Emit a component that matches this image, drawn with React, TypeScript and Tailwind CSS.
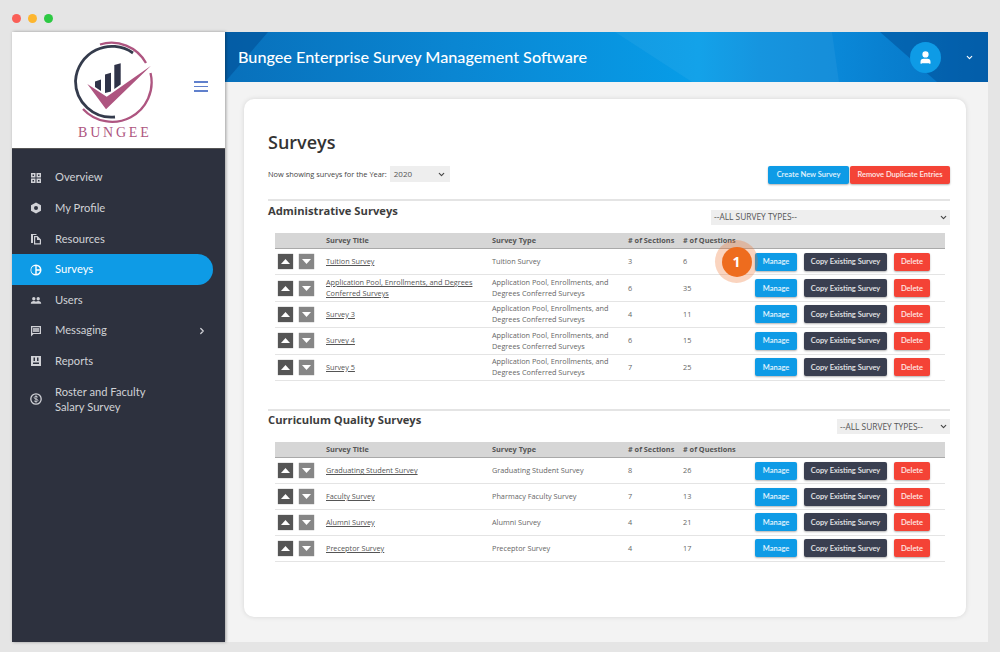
import { ChevronDown, ChevronRight, User } from "lucide-react";

const sans = "font-['Open_Sans',sans-serif]";
const nav = "font-['Lato',sans-serif]";

interface Survey {
  title: string;
  type: string;
  sections: number;
  questions: number;
}

const admin: Survey[] = [
  { title: "Tuition Survey", type: "Tuition Survey", sections: 3, questions: 6 },
  {
    title: "Application Pool, Enrollments, and Degrees Conferred Surveys",
    type: "Application Pool, Enrollments, and Degrees Conferred Surveys",
    sections: 6,
    questions: 35,
  },
  { title: "Survey 3", type: "Application Pool, Enrollments, and Degrees Conferred Surveys", sections: 4, questions: 11 },
  { title: "Survey 4", type: "Application Pool, Enrollments, and Degrees Conferred Surveys", sections: 6, questions: 15 },
  { title: "Survey 5", type: "Application Pool, Enrollments, and Degrees Conferred Surveys", sections: 7, questions: 25 },
];

const curriculum: Survey[] = [
  { title: "Graduating Student Survey", type: "Graduating Student Survey", sections: 8, questions: 26 },
  { title: "Faculty Survey", type: "Pharmacy Faculty Survey", sections: 7, questions: 13 },
  { title: "Alumni Survey", type: "Alumni Survey", sections: 4, questions: 21 },
  { title: "Preceptor Survey", type: "Preceptor Survey", sections: 4, questions: 17 },
];

const menu = [
  { label: "Overview", icon: "grid" },
  { label: "My Profile", icon: "hex" },
  { label: "Resources", icon: "files" },
  { label: "Surveys", icon: "pie", active: true },
  { label: "Users", icon: "users" },
  { label: "Messaging", icon: "chat", arrow: true },
  { label: "Reports", icon: "report" },
];

function MenuIcon({ name }: { name: string }) {
  return (
    <svg width="12" height="12" viewBox="0 0 12 12" fill="#d0d1d6" className="shrink-0">
      {name === "grid" && (
        <path d="M1 1h4.500v4.500H1zM6.500 1H11v4.500H6.500zM1 6.500h4.500V11H1zM6.500 6.500H11V11H6.500zM2.500 2.500v1.500H4V2.500zM8 2.500v1.500h1.500V2.500zM2.500 8v1.500H4V8zM8 8v1.500h1.500V8z" fillRule="evenodd" />
      )}
      {name === "hex" && <path d="M6 .5l5 2.700v5.600l-5 2.700-5-2.700V3.200zM6 4a2 2 0 100 4 2 2 0 000-4z" fillRule="evenodd" />}
      {name === "files" && <path d="M1 1h5l1 1H3v8H1zM4 3h3.500L11 6.500V11.500H4zM5.200 4.200v6.100h4.600V7H7V4.200z" fillRule="evenodd" />}
      {name === "pie" && (
        <path d="M6 .5a5.500 5.500 0 110 11 5.500 5.500 0 010-11zM5.300 2a4 4 0 000 8zM6.700 2v3.300H10A4 4 0 006.700 2zM6.700 6.700V10A4 4 0 0010 6.700z" fillRule="evenodd" fill="#ffffff" />
      )}
      {name === "users" && <path d="M3.800 3a1.700 1.700 0 110 3.400 1.700 1.700 0 010-3.400zM8.200 3a1.700 1.700 0 110 3.400 1.700 1.700 0 010-3.400zM.8 9.800C.8 8 2 7 3.800 7c1 0 1.700.3 2.200.8.500-.5 1.200-.8 2.200-.8C10 7 11.200 8 11.200 9.800z" />}
      {name === "chat" && <path d="M1 1h10v8H3.500L1 11.500zM2.300 2.300v5.600h7.400V2.300z" fillRule="evenodd" />}
      {name === "chat" && <path d="M3 3h6v4H3z" fillOpacity=".8" />}
      {name === "report" && <path d="M1 1h10v10H1zM3.500 2.500v3.500h1.500V2.500zM7 2.500v3.500h1.500V2.500zM3 7.500v1.500h6V7.500z" fillRule="evenodd" />}
    </svg>
  );
}

function DollarIcon() {
  return (
    <svg width="12" height="12" viewBox="0 0 12 12" className="shrink-0">
      <circle cx="6" cy="6" r="5.200" fill="none" stroke="#d0d1d6" strokeWidth="1.300" />
      <path d="M7.800 4.300C7.400 3.600 6.700 3.300 6 3.300c-1 0-1.800.5-1.800 1.400 0 1.900 3.700.8 3.700 2.600 0 .9-.9 1.400-1.900 1.400-.8 0-1.500-.3-1.900-1M6 2.400v7.200" fill="none" stroke="#d0d1d6" strokeWidth=".9" />
    </svg>
  );
}

function Logo() {
  return (
    <svg width="84" height="84" viewBox="0 0 84 84" className="block">
      {/* dark ring, upper right round the left to the bottom */}
      <path d="M62 12A36.500 36.500 0 0 0 4.500 40A36 36 0 0 0 44 76" fill="none" stroke="#343b4c" strokeWidth="2.800" />
      {/* pink ring, outside the dark one */}
      <path d="M29 3.500A39.500 39.500 0 0 1 75 22M79.500 32A39.500 39.500 0 0 1 12 68" fill="none" stroke="#ae5580" strokeWidth="2.300" />
      <path d="M24 40.500L30 38.500V50L24 46zM34 33.500L40 31.700V50.500L34 52zM43.300 24L49.700 22.300V43.500L43.300 48z" fill="#2f3348" />
      <path d="M16.300 43L35.700 55.700L80 24.700L35 68.300z" fill="#ae5580" />
    </svg>
  );
}

function Arrow({ up }: { up?: boolean }) {
  return (
    <span className={`flex h-[15px] w-[15px] items-center justify-center shadow-[0_0_1px_#777] ${up ? "bg-[#555555]" : "bg-[#868686]"}`}>
      <svg width="9" height="5" viewBox="0 0 9 5" fill="#ffffff">
        <path d={up ? "M4.500 0L9 5H0z" : "M0 0h9L4.500 5z"} />
      </svg>
    </span>
  );
}

function RowButton({ label, color, width }: { label: string; color: string; width: string }) {
  return (
    <span className={`flex h-[18px] items-center justify-center rounded-[2px] text-[7.500px] font-semibold text-white/90 shadow-[0_1px_2px_rgba(0,0,0,0.3)] ${nav} ${color} ${width}`}>
      {label}
    </span>
  );
}

const cols = "grid grid-cols-[51px_166px_136px_55px_72px_1fr] items-center";

function SurveyTable({ rows, rowClass }: { rows: Survey[]; rowClass: string }) {
  return (
    <div className={`ml-[7px] mr-[5px] text-[7.300px] leading-[11px] text-[#666666] ${sans}`}>
      <div className={`${cols} h-[16px] border-b border-[#a9a9a9] bg-[#d6d6d6] font-bold text-[#555555]`}>
        <span />
        <span>Survey Title</span>
        <span>Survey Type</span>
        <span># of Sections</span>
        <span># of Questions</span>
        <span />
      </div>
      {rows.map((r) => (
        <div key={r.title} className={`${cols} ${rowClass} border-b border-[#e4e4e4]`}>
          <div className="flex gap-[6px] pl-[3px]">
            <Arrow up />
            <Arrow />
          </div>
          <a className="pr-[16px] text-[#555555] underline">{r.title}</a>
          <span className="pr-[16px]">{r.type}</span>
          <span>{r.sections}</span>
          <span>{r.questions}</span>
          <div className="flex gap-[7px]">
            <RowButton label="Manage" color="bg-[#0e9be6]" width="w-[42px]" />
            <RowButton label="Copy Existing Survey" color="bg-[#3a3f50]" width="w-[83px]" />
            <RowButton label="Delete" color="bg-[#f44336]" width="w-[36px]" />
          </div>
        </div>
      ))}
    </div>
  );
}

function TypeSelect({ className }: { className: string }) {
  return (
    <div className={`flex h-[15px] items-center justify-between bg-[#eeeeee] pl-[3px] pr-[2px] text-[8.400px] text-[#555555] ${sans} ${className}`}>
      <span>--ALL SURVEY TYPES--</span>
      <ChevronDown size={9} strokeWidth={3} color="#444444" />
    </div>
  );
}

export default function App() {
  return (
    <div className="flex h-[652px] w-[1000px] flex-col overflow-hidden bg-[#e5e5e5] px-[12px] pb-[10px]">
      <div className="flex h-[32px] shrink-0 gap-[7px] pt-[14px]">
        <span className="h-[9px] w-[9px] rounded-full bg-[#fa5f57]" />
        <span className="h-[9px] w-[9px] rounded-full bg-[#fdb62f]" />
        <span className="h-[9px] w-[9px] rounded-full bg-[#2dc943]" />
      </div>

      <div className="flex min-h-0 flex-1">
        {/* sidebar */}
        <aside className="z-10 flex w-[213px] shrink-0 flex-col shadow-[1px_0_3px_rgba(0,0,0,0.35)]">
          <div className="relative flex h-[116px] shrink-0 flex-col bg-white pl-[59px] pt-[9px]">
            <div className="h-[84px] w-[84px]">
              <Logo />
            </div>
            <span className="ml-[7px] font-['Liberation_Serif',serif] text-[14px] leading-[15px] tracking-[2.800px] text-[#ae5580]">
              BUNGEE
            </span>
            <div className="absolute left-[182px] top-[49px] flex flex-col gap-[3px]">
              <span className="h-[1.500px] w-[14px] bg-[#6080cc]" />
              <span className="h-[1.500px] w-[14px] bg-[#6080cc]" />
              <span className="h-[1.500px] w-[14px] bg-[#6080cc]" />
            </div>
          </div>
          <nav className={`flex flex-1 flex-col border-t border-[#555] bg-[#2d313e] pt-[13.500px] text-[11.200px] text-[#d0d1d6] ${nav}`}>
            {menu.map((m) => (
              <div
                key={m.label}
                className={`flex h-[30.600px] items-center pl-[18px] ${m.active ? "w-[201px] rounded-r-full bg-[#0e9be6] text-white" : "w-full"}`}
              >
                <MenuIcon name={m.icon} />
                <span className="ml-[13px] flex-1">{m.label}</span>
                {m.arrow && <ChevronRight size={10} strokeWidth={3} className="mr-[18px]" />}
              </div>
            ))}
            <div className="mt-[7px] flex items-center pl-[18px] leading-[15px]">
              <DollarIcon />
              <span className="ml-[13px]">
                Roster and Faculty
                <br />
                Salary Survey
              </span>
            </div>
          </nav>
        </aside>

        {/* main */}
        <div className="flex min-w-0 flex-1 flex-col bg-[#f3f3f3]">
          <header className="relative flex h-[50px] shrink-0 items-center overflow-hidden bg-[linear-gradient(90deg,#0870bb_0%,#0a86d2_30%,#079de8_62%,#0a90de_70%,#0a88d8_80%,#0670c0_100%)] pl-[13px] pr-[14px]">
            <svg className="absolute inset-0" width="763" height="50" viewBox="0 0 763 50">
              <path d="M0 0H43L0 50z" fill="#004a8f" fillOpacity=".5" />
              <path d="M390 0L467 50H614L607 0z" fill="#ffffff" fillOpacity=".05" />
              <path d="M655 0H763V50H712z" fill="#00488f" fillOpacity=".45" />
            </svg>
            <h1 className={`relative flex-1 text-[16.200px] font-medium text-white ${nav}`}>
              Bungee Enterprise Survey Management Software
            </h1>
            <span className="relative flex h-[31px] w-[31px] items-center justify-center rounded-full bg-[#0e9be6]">
              <User size={15} fill="#ffffff" color="#ffffff" />
            </span>
            <ChevronDown size={9} strokeWidth={3} color="#ffffff" className="relative ml-[24px]" />
          </header>

          <div className="min-h-0 flex-1 pl-[19px] pr-[22px] pt-[17px]">
            <main className="relative h-[518px] rounded-[10px] bg-white px-[24px] pt-[29px] shadow-[0_0_5px_rgba(0,0,0,0.12)]">
              <h2 className={`text-[18px] font-semibold leading-[28px] text-[#333333] ${sans}`}>Surveys</h2>

              <div className="mt-[10px] flex h-[18px] items-center justify-between">
                <div className={`flex items-center text-[7.400px] text-[#444444] ${sans}`}>
                  <span>Now showing surveys for the Year:</span>
                  <span className="mb-[2px] ml-[3px] flex h-[16px] w-[60px] items-center justify-between bg-[#eeeeee] px-[4px] text-[8px] text-[#555555]">
                    2020
                    <ChevronDown size={9} strokeWidth={3} color="#444444" />
                  </span>
                </div>
                <div className={`mr-[-8px] flex gap-[1px] text-[7.500px] font-semibold text-white/90 ${nav}`}>
                  <span className="flex h-[18px] w-[81px] items-center justify-center rounded-[2px] bg-[#0e9be6] shadow-[0_1px_2px_rgba(0,0,0,0.3)]">Create New Survey</span>
                  <span className="flex h-[18px] w-[100px] items-center justify-center rounded-[2px] bg-[#f44336] shadow-[0_1px_2px_rgba(0,0,0,0.3)]">Remove Duplicate Entries</span>
                </div>
              </div>

              <div className="mr-[-8px] mt-[15px] border-t-2 border-[#e4e4e4] pt-[1px]">
                <div className="flex h-[22px] items-start justify-between">
                  <h3 className={`text-[11.200px] font-bold leading-[17px] text-[#3d3d3d] ${sans}`}>Administrative Surveys</h3>
                  <TypeSelect className="mt-[8px] w-[239px]" />
                </div>
                <div className="mt-[9px]">
                  <SurveyTable rows={admin} rowClass="h-[26.400px]" />
                </div>
              </div>

              <div className="mr-[-8px] mt-[28.500px] border-t-2 border-[#e4e4e4]">
                <div className="flex h-[22px] items-start justify-between">
                  <h3 className={`text-[11.200px] font-bold leading-[17px] text-[#3d3d3d] ${sans}`}>Curriculum Quality Surveys</h3>
                  <TypeSelect className="mt-[8px] w-[113px]" />
                </div>
                <div className="mt-[9px]">
                  <SurveyTable rows={curriculum} rowClass="h-[25.800px]" />
                </div>
              </div>

              {/* step marker */}
              <div className="absolute left-[471px] top-[141px] flex h-[43px] w-[43px] items-center justify-center rounded-full bg-[#f0702a]/30">
                <span className="flex h-[30px] w-[30px] items-center justify-center rounded-full bg-[#ee6c1e] font-['Open_Sans',sans-serif] text-[14px] font-bold text-white">
                  1
                </span>
              </div>
            </main>
          </div>
        </div>
      </div>
    </div>
  );
}
